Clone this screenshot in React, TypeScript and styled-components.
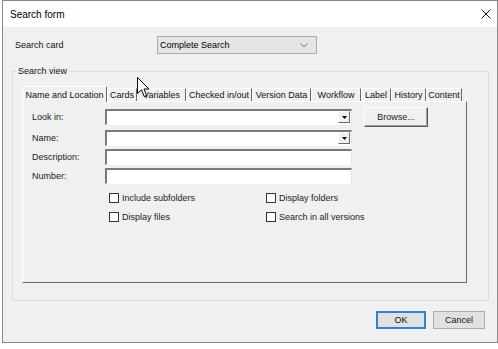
import React from "react";
import styled, { createGlobalStyle } from "styled-components";

const GlobalStyle = createGlobalStyle`
  html, body {
    margin: 0;
    padding: 0;
    background: #fff;
  }
  body {
    font-family: "Liberation Sans", Arial, sans-serif;
    color: #000;
  }
`;

const tabs = [
  { title: "Name and Location", w: 85 },
  { title: "Cards", w: 30 },
  { title: "Variables", w: 49 },
  { title: "Checked in/out", w: 66 },
  { title: "Version Data", w: 59 },
  { title: "Workflow", w: 50 },
  { title: "Label", w: 30 },
  { title: "History", w: 35 },
  { title: "Content", w: 36 },
];

const fields = [
  { label: "Look in:", combo: true },
  { label: "Name:", combo: true },
  { label: "Description:", combo: false },
  { label: "Number:", combo: false },
];

const checks = ["Include subfolders", "Display folders", "Display files", "Search in all versions"];

const App = () => {
  return (
    <>
      <GlobalStyle />
      <Window>
        <TitleBar>
          <span>Search form</span>
          <svg width="10" height="10" viewBox="0 0 10 10">
            <path d="M0.5 0.5 L9.5 9.5 M9.5 0.5 L0.5 9.5" stroke="#111" strokeWidth="1" fill="none" />
          </svg>
        </TitleBar>
        <Body>
          <CardRow>
            <CardLabel>Search card</CardLabel>
            <Select>
              <span>Complete Search</span>
              <svg width="8" height="5" viewBox="0 0 8 5">
                <path d="M0.5 0.5 L4 4 L7.5 0.5" stroke="#777" strokeWidth="1" fill="none" />
              </svg>
            </Select>
          </CardRow>
          <Group>
            <Legend>Search view</Legend>
            <TabStrip>
              {tabs.map((t, i) => (
                <Tab key={t.title} w={t.w} active={i === 0}>
                  {t.title}
                </Tab>
              ))}
            </TabStrip>
            <Panel>
              <FormGrid>
                {fields.map((f, i) => (
                  <React.Fragment key={f.label}>
                    <FieldLabel>{f.label}</FieldLabel>
                    <Input>
                      {f.combo && (
                        <DropButton>
                          <svg width="5" height="3" viewBox="0 0 5 3">
                            <path d="M0 0 L5 0 L2.5 3 Z" fill="#000" />
                          </svg>
                        </DropButton>
                      )}
                    </Input>
                    {i === 0 ? <BrowseButton>Browse...</BrowseButton> : <span />}
                  </React.Fragment>
                ))}
              </FormGrid>
              <Checks>
                {checks.map((c) => (
                  <CheckItem key={c}>
                    <Box />
                    <span>{c}</span>
                  </CheckItem>
                ))}
              </Checks>
            </Panel>
          </Group>
          <Footer>
            <DialogButton primary>OK</DialogButton>
            <DialogButton>Cancel</DialogButton>
          </Footer>
        </Body>
        <Cursor width="13" height="21" viewBox="0 0 13 21">
          <path
            d="M0.5 0.5 L0.5 16.5 L4.5 12.8 L7.2 19.5 L9.6 18.5 L7 12 L12 12 Z"
            fill="#fff"
            stroke="#000"
            strokeWidth="1"
            strokeLinejoin="miter"
          />
        </Cursor>
      </Window>
    </>
  );
};
export default App;

const Window = styled.div`
  position: relative;
  margin-left: 2px;
  width: 496px;
  height: 343px;
  box-sizing: border-box;
  border: 1px solid #8a8a8a;
  background: #f0f0f0;
  display: flex;
  flex-direction: column;
`;

const TitleBar = styled.div`
  height: 26px;
  flex: none;
  background: #fff;
  display: flex;
  align-items: center;
  justify-content: space-between;
  padding: 0 6px 0 7px;
  font-size: 10px;
`;

const Body = styled.div`
  display: flex;
  flex-direction: column;
  padding: 9px 8px 0 9px;
  font-size: 9px;
`;

const CardRow = styled.div`
  display: flex;
  align-items: center;
  height: 18px;
  padding-left: 3px;
`;

const CardLabel = styled.div`
  width: 142px;
  font-size: 9px;
  color: #111;
`;

const Select = styled.div`
  width: 160px;
  height: 18px;
  box-sizing: border-box;
  background: #e5e5e5;
  border: 1px solid #acacac;
  display: flex;
  align-items: center;
  justify-content: space-between;
  padding: 0 8px 0 2px;
  font-size: 9px;
`;

const Group = styled.fieldset`
  margin: 12px 0 0 0;
  border: 1px solid #dcdcdc;
  padding: 10px 20px 17px 9px;
  min-width: 0;
`;

const Legend = styled.legend`
  margin-left: -6px;
  padding: 0 2px;
  font-size: 9px;
  color: #111;
`;

const TabStrip = styled.div`
  display: flex;
  align-items: flex-end;
  height: 15px;
`;

const Tab = styled.div<{ w: number; active?: boolean }>`
  width: ${({ w }) => w}px;
  height: ${({ active }) => (active ? 16 : 13)}px;
  margin-bottom: ${({ active }) => (active ? -1 : 0)}px;
  box-sizing: border-box;
  flex: none;
  position: relative;
  z-index: ${({ active }) => (active ? 1 : 0)};
  background: #f0f0f0;
  border-top: 1px solid #fff;
  border-left: 1px solid #fff;
  border-right: 1px solid #696969;
  display: flex;
  align-items: center;
  justify-content: center;
  font-size: 9px;
  white-space: nowrap;
  color: #111;
`;

const Panel = styled.div`
  width: 445px;
  height: 182px;
  box-sizing: border-box;
  border: 1px solid;
  border-color: #fff #696969 #696969 #fff;
  padding: 5px 0 0 9px;
`;

const FormGrid = styled.div`
  display: grid;
  grid-template-columns: 73px 247px 76px;
  row-gap: 3px;
  align-items: center;
`;

const FieldLabel = styled.div`
  font-size: 9px;
  color: #222;
`;

const Input = styled.div`
  height: 16px;
  box-sizing: border-box;
  background: #fff;
  border-top: 2px solid #7a7a7a;
  border-left: 2px solid #7a7a7a;
  border-right: 1px solid #e3e3e3;
  border-bottom: 1px solid #fff;
  display: flex;
  justify-content: flex-end;
  padding: 0 1px 0 0;
`;

const DropButton = styled.div`
  width: 12px;
  height: 12px;
  box-sizing: border-box;
  background: #f0f0f0;
  border: 1px solid;
  border-color: #fff #696969 #696969 #fff;
  display: flex;
  align-items: center;
  justify-content: center;
`;

const BrowseButton = styled.div`
  justify-self: end;
  align-self: start;
  width: 64px;
  height: 20px;
  box-sizing: border-box;
  background: #f0f0f0;
  border: 1px solid;
  border-color: #fff #5a5a5a #5a5a5a #fff;
  box-shadow: inset -1px -1px 0 #a0a0a0;
  display: flex;
  align-items: center;
  justify-content: center;
  font-size: 9px;
  color: #222;
`;

const Checks = styled.div`
  display: grid;
  grid-template-columns: 157px auto;
  row-gap: 4px;
  margin: 6px 0 0 77px;
`;

const CheckItem = styled.div`
  display: flex;
  align-items: center;
  height: 15px;
  font-size: 9px;
  color: #222;
`;

const Box = styled.div`
  width: 10px;
  height: 10px;
  box-sizing: border-box;
  border: 1px solid #333;
  background: #fff;
  margin-right: 3px;
`;

const Footer = styled.div`
  display: flex;
  justify-content: flex-end;
  gap: 7px;
  margin-top: 10px;
  padding-right: 4px;
`;

const DialogButton = styled.div<{ primary?: boolean }>`
  width: ${({ primary }) => (primary ? 50 : 52)}px;
  height: 18px;
  box-sizing: border-box;
  background: #e1e1e1;
  border: ${({ primary }) => (primary ? "2px solid #2f80d4" : "1px solid #adadad")};
  display: flex;
  align-items: center;
  justify-content: center;
  font-size: 9px;
  color: #111;
`;

const Cursor = styled.svg`
  position: absolute;
  left: 134px;
  top: 76px;
  pointer-events: none;
`;
